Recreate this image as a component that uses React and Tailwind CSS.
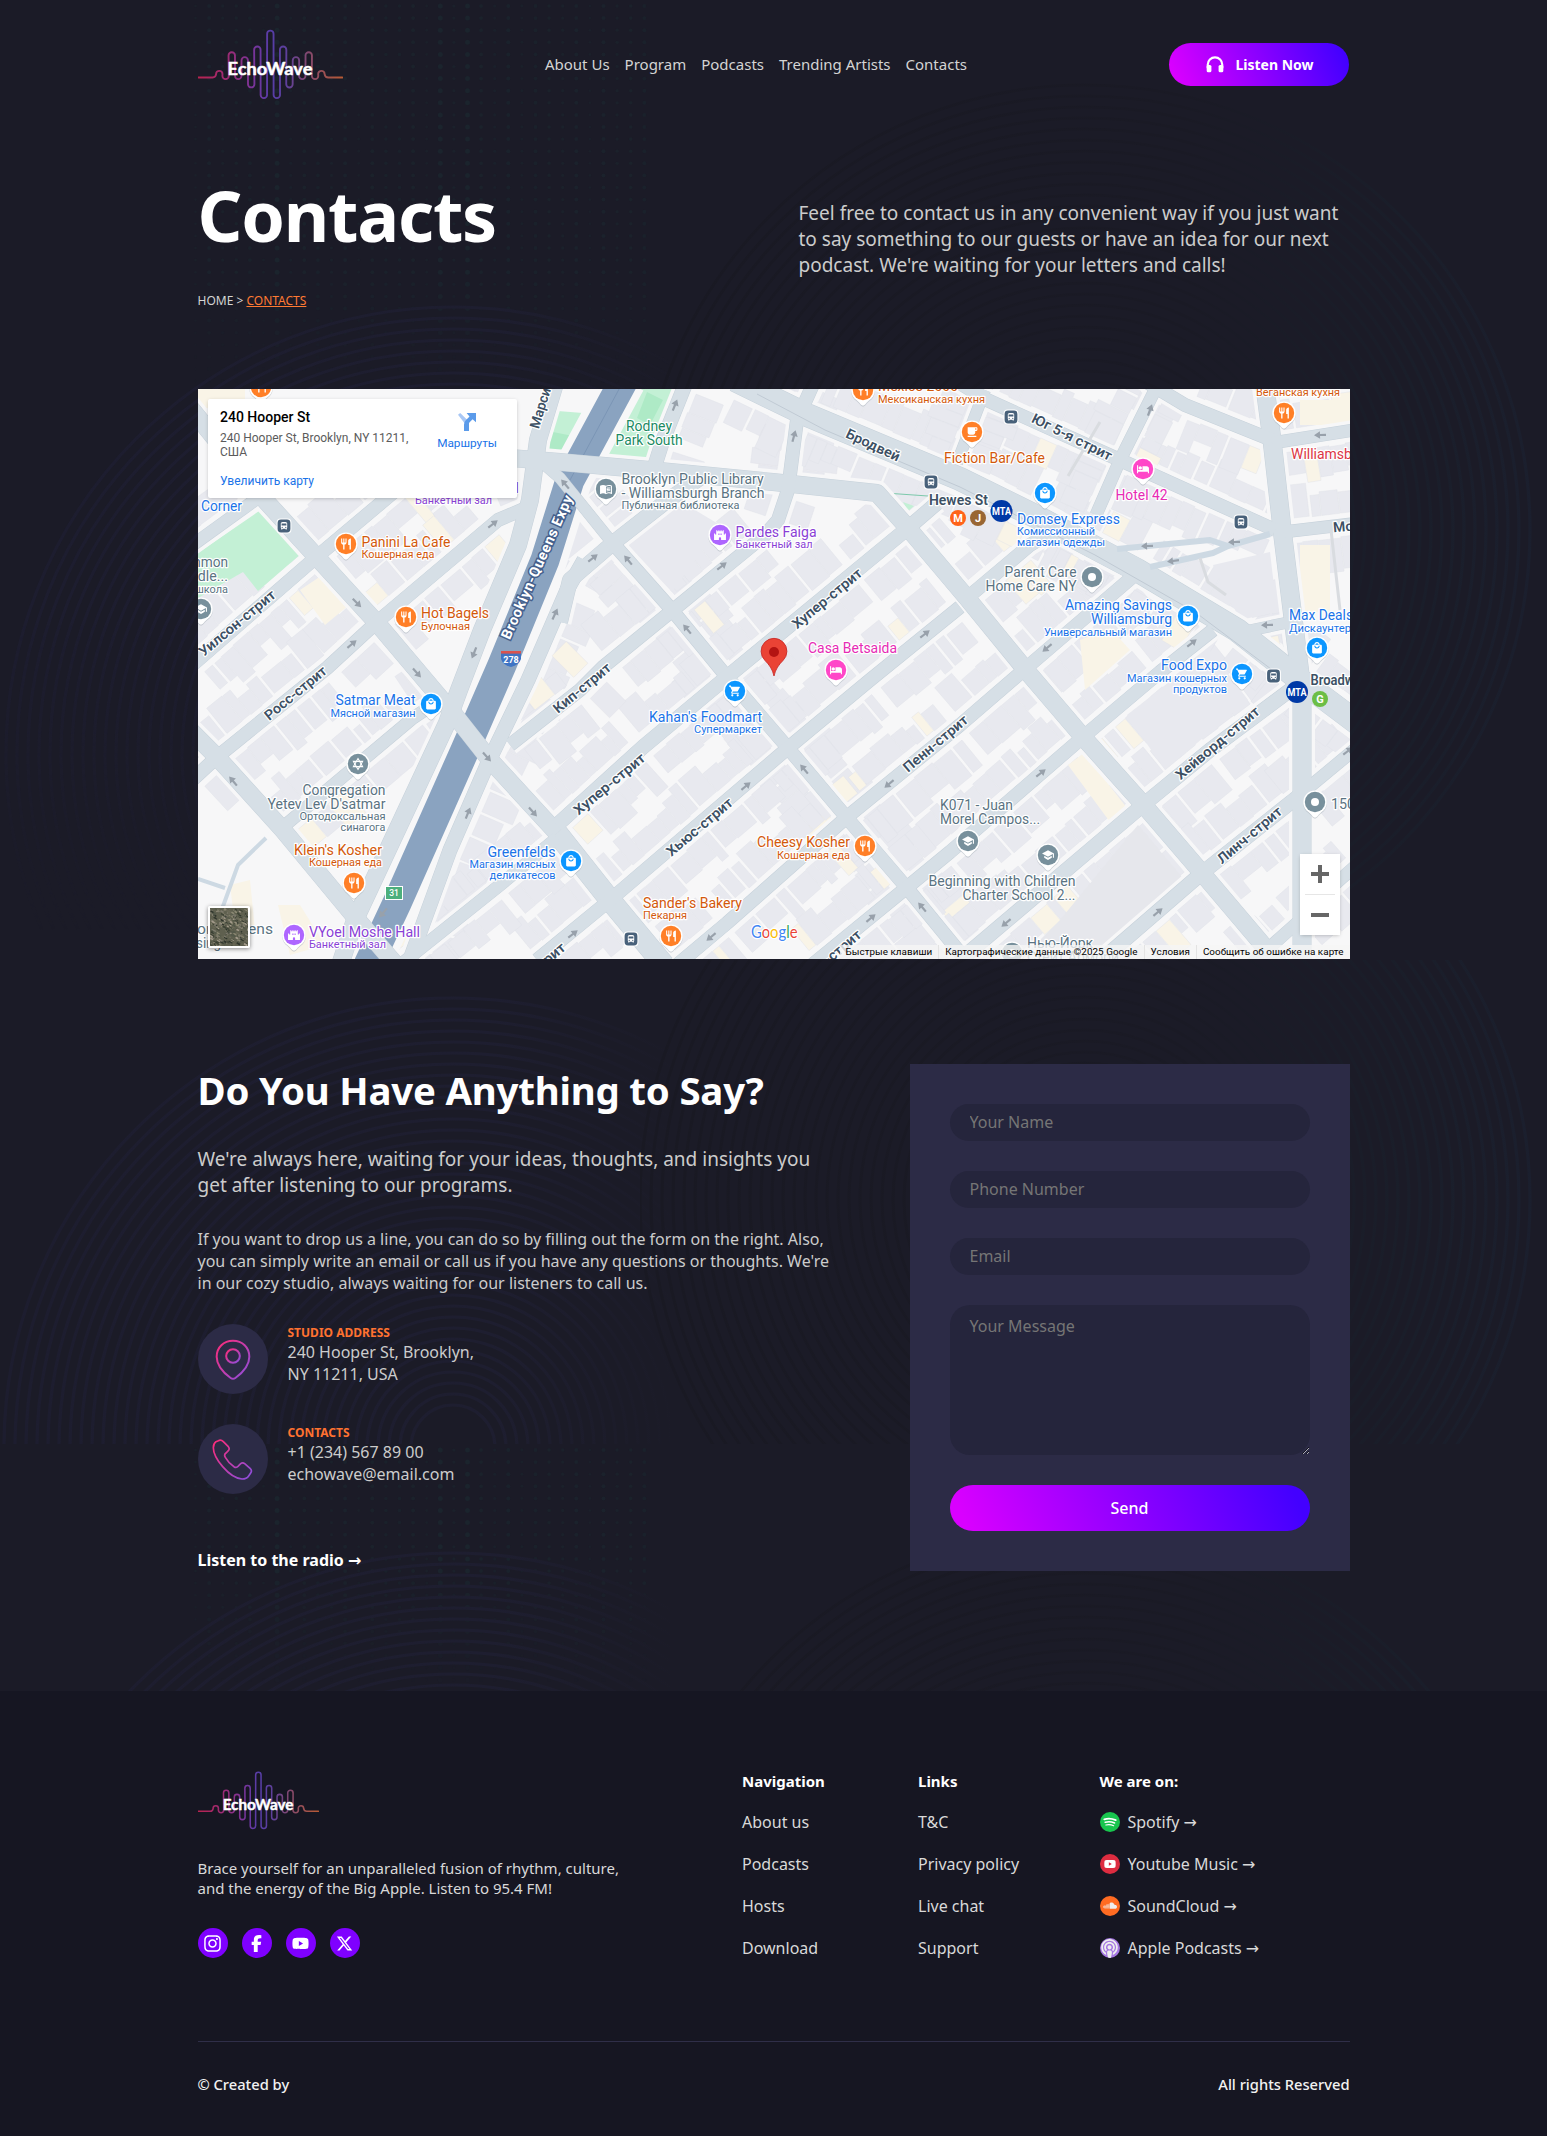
import React from "react";
import {
  FaInstagram,
  FaFacebookF,
  FaYoutube,
  FaXTwitter,
  FaSoundcloud,
  FaPodcast,
} from "react-icons/fa6";
import {
  MdRestaurant,
  MdLocalCafe,
  MdLocalMall,
  MdShoppingCart,
  MdHotel,
  MdMenuBook,
  MdSchool,
  MdDirectionsBus,
  MdCastle,
} from "react-icons/md";

/* ---------- helpers ---------- */

function makeRandom(seed) {
  let s = seed;
  return () => {
    s = (s * 1664525 + 1013904223) % 4294967296;
    return s / 4294967296;
  };
}

/* ---------- logo ---------- */

const WAVE = [
  [118, 183, 1], [137, 208, 0], [155.5, 127, 1], [175, 208, 0], [194.5, 142, 1], [214, 233, 0],
  [232.5, 110, 1], [252, 265, 0], [271.5, 62, 1], [291, 265, 0], [310, 110, 1], [329, 233, 0],
  [348.5, 142, 1], [367.5, 208, 0], [387, 127, 1], [406, 208, 0], [425, 183, 1],
];
const R = 9.65;
const WAVE_PATH =
  "M55 203H98Q107 203 108.5 193" +
  WAVE.map(([x, y, top]) => {
    const e = top ? y + R : y - R;
    return `L${x - R} ${e}A${R} ${R} 0 0 ${top} ${x + R} ${e}`;
  }).join("") +
  "Q436 203 446 203H488";

function Logo({ id, className }) {
  return (
    <svg viewBox="54 58 436 212" className={className} role="img" aria-label="EchoWave">
      <defs>
        <linearGradient id={id} gradientUnits="userSpaceOnUse" x1="55" y1="0" x2="488" y2="0">
          <stop offset="0" stopColor="#b82350" />
          <stop offset="0.22" stopColor="#9a2c78" />
          <stop offset="0.38" stopColor="#7a349a" />
          <stop offset="0.5" stopColor="#553da8" />
          <stop offset="0.62" stopColor="#5f409a" />
          <stop offset="0.76" stopColor="#83486f" />
          <stop offset="1" stopColor="#b85a34" />
        </linearGradient>
      </defs>
      <path d={WAVE_PATH} fill="none" stroke={`url(#${id})`} strokeWidth="5.6" strokeLinecap="round" />
      <text
        x="143"
        y="197"
        textLength="255"
        lengthAdjust="spacingAndGlyphs"
        fontFamily="Lato, sans-serif"
        fontWeight="700"
        fontSize="52"
        fill="#fff"
        stroke="#fff"
        strokeWidth="1.4"
        strokeLinejoin="round"
      >
        EchoWave
      </text>
    </svg>
  );
}

/* ---------- page backdrop ---------- */

function Rings({ cx, cy, from, to, stroke, step = 11, width = 3.2 }) {
  const out = [];
  for (let r = from; r <= to; r += step) {
    out.push(<circle key={r} cx={cx} cy={cy} r={r} fill="none" stroke={stroke} strokeWidth={width} />);
  }
  return <g>{out}</g>;
}

function Dots({ top, rows }) {
  const out = [];
  for (let c = 0; c < 34; c++) {
    const x = 195.5 + c * 13.6;
    const strength = [6, 18, 20].includes(c) ? 1 : 0.25 + 0.45 * Math.abs(Math.sin(c * 1.3));
    for (let r = 0; r < rows; r++) {
      const y = top + 6 + r * 12.1;
      const fade = Math.min(1, (rows - r) / 10);
      out.push(<circle key={`${c}-${r}`} cx={x} cy={y} r={0.9 + 1.6 * strength} fill="#1b242d" opacity={fade * (0.4 + 0.6 * strength)} />);
    }
  }
  return <g>{out}</g>;
}

function Backdrop() {
  return (
    <svg className="pointer-events-none absolute inset-x-0 top-0 h-[1691px] w-full" viewBox="0 0 1547 1691" preserveAspectRatio="none" aria-hidden="true">
      <defs>
        <linearGradient id="leftFade" gradientUnits="userSpaceOnUse" x1="0" x2="700" y1="0" y2="0">
          <stop offset="0" stopColor="#1d1d2f" />
          <stop offset="0.7" stopColor="#1e1e30" />
          <stop offset="0.97" stopColor="#1b1b27" />
        </linearGradient>
        <linearGradient id="rightFade" gradientUnits="userSpaceOnUse" x1="640" x2="1547" y1="0" y2="0">
          <stop offset="0" stopColor="#191923" />
          <stop offset="0.6" stopColor="#1a1a25" />
          <stop offset="0.85" stopColor="#1a1e2a" />
          <stop offset="1" stopColor="#1b1f2e" />
        </linearGradient>
        <linearGradient id="downFade" gradientUnits="userSpaceOnUse" x1="0" x2="0" y1="620" y2="930">
          <stop offset="0" stopColor="#fff" />
          <stop offset="1" stopColor="#000" />
        </linearGradient>
        <mask id="m1" maskUnits="userSpaceOnUse" x="0" y="0" width="670" height="940">
          <rect x="0" y="0" width="670" height="940" fill="url(#downFade)" />
        </mask>
        <clipPath id="c2"><rect x="0" y="960" width="670" height="484" /></clipPath>
        <clipPath id="c3"><rect x="0" y="1444" width="670" height="260" /></clipPath>
        <clipPath id="c4"><rect x="640" y="0" width="907" height="900" /></clipPath>
        <clipPath id="c5"><rect x="640" y="960" width="907" height="484" /></clipPath>
        <clipPath id="c6"><rect x="640" y="1444" width="907" height="260" /></clipPath>
      </defs>
      <Dots top={0} rows={32} />
      <Dots top={1444} rows={20} />
      <g mask="url(#m1)"><Rings cx={453} cy={754} from={40} to={450} stroke="url(#leftFade)" /></g>
      <g clipPath="url(#c2)"><Rings cx={453} cy={1447} from={42} to={455} stroke="url(#leftFade)" /></g>
      <g clipPath="url(#c3)"><Rings cx={453} cy={2000} from={40} to={450} stroke="url(#leftFade)" /></g>
      <g clipPath="url(#c4)"><Rings cx={1085} cy={530} from={60} to={450} stroke="url(#rightFade)" /></g>
      <g clipPath="url(#c5)"><Rings cx={1085} cy={1200} from={60} to={452} stroke="url(#rightFade)" /></g>
      <g clipPath="url(#c6)"><Rings cx={1085} cy={1974} from={60} to={450} stroke="url(#rightFade)" /></g>
    </svg>
  );
}

/* ---------- map ---------- */

const ROADS = [
  { w: 17, p: [[180, 395], [263, 498], [313, 553], [377, 623], [453, 713], [490, 760], [557, 833]] },
  { w: 21, p: [[557, 833], [610, 900], [664, 965]] },
  { w: 13, p: [[190, 667], [313, 560], [420, 470]] },
  { w: 12, p: [[190, 547], [262, 495]] },
  { w: 13, p: [[190, 782], [217, 757], [327, 668], [377, 622], [498, 520], [524, 509]] },
  { w: 17, p: [[556, 380], [538, 440], [530, 500], [518, 545], [482, 630], [459, 690], [447, 723], [355, 920], [340, 965]] },
  { w: 14, p: [[584, 560], [567, 590], [528, 680], [487, 765], [450, 850], [408, 965]] },
  { w: 15, p: [[560, 622], [570, 580], [613, 543], [668, 500], [700, 478]] },
  { w: 17, p: [[500, 457], [560, 462], [650, 470], [773, 482], [877, 493], [908, 528], [967, 598], [1025, 669], [1083, 737], [1142, 803], [1202, 873], [1280, 965]] },
  { w: 11, p: [[545, 465], [560, 478], [610, 540]] },
  { w: 13, p: [[610, 540], [672, 610], [727, 677], [788, 748], [847, 818], [907, 888], [970, 965]] },
  { w: 14, p: [[937, 503], [908, 528], [857, 570], [727, 677], [643, 747], [557, 825]] },
  { w: 13, p: [[815, 380], [797, 420], [788, 490], [778, 520], [765, 535], [673, 610], [603, 667], [580, 690], [510, 745]] },
  { w: 13, p: [[960, 607], [870, 680], [788, 748], [610, 900], [537, 960]] },
  { w: 13, p: [[967, 598], [1030, 545], [1068, 522]] },
  { w: 13, p: [[1137, 573], [1025, 669], [960, 725], [847, 817], [727, 923], [677, 965]] },
  { w: 13, p: [[1213, 630], [1160, 672], [1083, 737], [950, 852], [905, 889], [812, 965]] },
  { w: 14, p: [[1297, 685], [1210, 750], [1143, 805], [960, 960]] },
  { w: 14, p: [[1300, 795], [1202, 873], [1098, 963]] },
  { w: 12, p: [[1298, 922], [1250, 965]] },
  { w: 12, p: [[1360, 862], [1300, 915]] },
  { w: 12, p: [[1360, 745], [1296, 798]] },
  { w: 18, p: [[1264, 380], [1272, 440], [1283, 537], [1297, 650], [1302, 690], [1302, 965]] },
  { w: 23, p: [[735, 380], [807, 415], [960, 479], [1033, 515], [1137, 570], [1237, 630], [1300, 680], [1360, 725]] },
  { w: 13, p: [[955, 380], [987, 400], [1120, 460], [1275, 530]] },
  { w: 13, p: [[1140, 378], [1185, 405], [1272, 440]] },
  { w: 12, p: [[1160, 380], [1120, 460], [1096, 515]] },
  { w: 11, p: [[985, 390], [957, 463]] },
  { w: 12, p: [[1272, 443], [1360, 429]] },
  { w: 12, p: [[1283, 532], [1360, 523]] },
  { w: 11, p: [[1247, 631], [1300, 620]] },
  { w: 14, p: [[655, 465], [663, 440], [687, 380]] },
  { w: 17, p: [[180, 720], [217, 757], [283, 830], [360, 923], [396, 965]] },
  { w: 12, p: [[283, 827], [413, 718], [440, 700]] },
  { w: 12, p: [[557, 838], [500, 885], [400, 965]] },
];

const EXPRESSWAY = "M624 380L570 480L545 560L502 665L465 750L397 903L368 965";

const line = (pts) => pts.map((p, i) => `${i ? "L" : "M"}${p[0]} ${p[1]}`).join("");

function buildLots() {
  const rnd = makeRandom(41);
  const lots = [];
  const rows = ROADS.filter((r) => r.w <= 14 || r.w === 23);
  rows.forEach((road) => {
    for (let i = 0; i < road.p.length - 1; i++) {
      const [x1, y1] = road.p[i];
      const [x2, y2] = road.p[i + 1];
      const len = Math.hypot(x2 - x1, y2 - y1);
      if (len < 25) continue;
      const ang = (Math.atan2(y2 - y1, x2 - x1) * 180) / Math.PI;
      [-1, 1].forEach((side) => {
        let t = 8;
        while (t < len - 12) {
          const w = 8 + rnd() * 17;
          const d = 17 + rnd() * 17;
          const inset = road.w / 2 + 5 + rnd() * 2;
          lots.push({
            x: x1,
            y: y1,
            ang,
            rx: t,
            ry: side > 0 ? inset : -inset - d,
            w,
            d,
            fill: rnd() < 0.07 ? "#f9f4e7" : "#e8e9ef",
          });
          t += w + (rnd() < 0.3 ? 3 : 0.6);
        }
      });
    }
  });
  return lots;
}
const LOTS = buildLots();

const INK = {
  food: "#d3590b",
  shop: "#1a73e8",
  hall: "#8a3fd6",
  stay: "#e62bb5",
  gray: "#5a7382",
  park: "#1b8a63",
  red: "#dc3545",
  dark: "#3c5064",
};

/* x, baseline, text, ink, anchor, width, small */
const LABELS = [
  [201, 511, "Corner", "shop", "start", 41],
  [415, 504, "Банкетный зал", "hall", "start", 77, 1],
  [519, 493, "Hall", "hall", "end", 26],
  [228, 567, "Common", "gray", "end", 56],
  [228, 581, "Middle...", "gray", "end", 54],
  [228, 593, "школа", "gray", "end", 33, 1],
  [361.5, 547, "Panini La Cafe", "food", "start", 89],
  [361.5, 557.5, "Кошерная еда", "food", "start", 73, 1],
  [421, 618, "Hot Bagels", "food", "start", 68],
  [421, 630, "Булочная", "food", "start", 49, 1],
  [649, 431, "Rodney", "park", "middle", 46],
  [649, 445, "Park South", "park", "middle", 67],
  [621.5, 484, "Brooklyn Public Library", "gray", "start", 142],
  [621.5, 498, "- Williamsburgh Branch", "gray", "start", 143],
  [621.5, 509, "Публичная библиотека", "gray", "start", 118, 1],
  [735.5, 537, "Pardes Faiga", "hall", "start", 81],
  [735.5, 548, "Банкетный зал", "hall", "start", 77, 1],
  [878, 391, "Mexico 2000", "food", "start", 80],
  [878, 403, "Мексиканская кухня", "food", "start", 107, 1],
  [1045, 463, "Fiction Bar/Cafe", "food", "end", 101],
  [808, 653, "Casa Betsaida", "stay", "start", 89],
  [1115.5, 500, "Hotel 42", "stay", "start", 52],
  [1017, 524, "Domsey Express", "shop", "start", 103],
  [1017, 535, "Комиссионный", "shop", "start", 78, 1],
  [1017, 546, "магазин одежды", "shop", "start", 88, 1],
  [1076.5, 577, "Parent Care", "gray", "end", 72],
  [1076.5, 591, "Home Care NY", "gray", "end", 91],
  [1172, 610, "Amazing Savings", "shop", "end", 107],
  [1172, 624, "Williamsburg", "shop", "end", 81],
  [1172, 636, "Универсальный магазин", "shop", "end", 128, 1],
  [1256, 395.5, "Веганская кухня", "food", "start", 84, 1],
  [1291, 459, "Williamsburg", "red", "start", 81],
  [1289, 620, "Max Deals", "shop", "start", 64],
  [1289, 632, "Дискаунтер", "shop", "start", 62, 1],
  [1227, 670, "Food Expo", "shop", "end", 66],
  [1227, 681.5, "Магазин кошерных", "shop", "end", 100, 1],
  [1227, 692.5, "продуктов", "shop", "end", 54, 1],
  [415.5, 705, "Satmar Meat", "shop", "end", 80],
  [415.5, 716.5, "Мясной магазин", "shop", "end", 85, 1],
  [385.5, 795, "Congregation", "gray", "end", 83],
  [385.5, 809, "Yetev Lev D'satmar", "gray", "end", 118],
  [385.5, 819.5, "Ортодоксальная", "gray", "end", 86, 1],
  [385.5, 830.5, "синагога", "gray", "end", 45, 1],
  [382, 855, "Klein's Kosher", "food", "end", 88],
  [382, 866, "Кошерная еда", "food", "end", 73, 1],
  [555.5, 857, "Greenfelds", "shop", "end", 68],
  [555.5, 867.5, "Магазин мясных", "shop", "end", 86, 1],
  [555.5, 878.5, "деликатесов", "shop", "end", 66, 1],
  [309, 937, "VYoel Moshe Hall", "hall", "start", 111],
  [309, 947.5, "Банкетный зал", "hall", "start", 77, 1],
  [197, 934, "or Gardens", "gray", "start", 76],
  [196, 948, "sing", "gray", "start", 25],
  [762, 722, "Kahan's Foodmart", "shop", "end", 113],
  [762, 732.5, "Супермаркет", "shop", "end", 68, 1],
  [850, 847, "Cheesy Kosher", "food", "end", 93],
  [850, 858.5, "Кошерная еда", "food", "end", 73, 1],
  [643, 908, "Sander's Bakery", "food", "start", 99],
  [643, 918.5, "Пекарня", "food", "start", 44, 1],
  [940, 810, "K071 - Juan", "gray", "start", 73],
  [940, 824, "Morel Campos...", "gray", "start", 100],
  [1075.5, 886, "Beginning with Children", "gray", "end", 147],
  [1075.5, 900, "Charter School 2...", "gray", "end", 113],
  [1027, 948, "Нью-Йорк", "gray", "start", 66],
  [1027, 962, "Стейт Армори", "gray", "start", 92],
  [1331, 809, "150", "gray", "start", 24],
];

/* cx, cy, angle, text, width */
const STREETS = [
  [237, 623, -39.5, "Уилсон-стрит", 95],
  [295.5, 693, -39.5, "Росс-стрит", 76],
  [582, 688, -39.5, "Кип-стрит", 70],
  [609.5, 784, -39.5, "Хупер-стрит", 88],
  [827, 598.5, -39.5, "Хупер-стрит", 86],
  [699.5, 827, -40, "Хьюс-стрит", 82],
  [935.5, 743.5, -40, "Пенн-стрит", 80],
  [1217.5, 743, -40, "Хейворд-стрит", 105],
  [1249.5, 835, -40, "Линч-стрит", 80],
  [828, 959, -40, "Хьюс-стрит", 82],
  [533, 971, -40, "Росс-стрит", 80],
  [873, 445, 25, "Бродвей", 58],
  [1072, 437, 26.5, "Юг 5-я стрит", 88],
  [547, 386, -73, "Марси-авеню", 88],
  [1362, 525, -5, "Монтроз", 58],
  [958.5, 500.5, 0, "Hewes St", 59],
  [1339, 680.5, 0, "Broadway", 57],
];

const PINS = [
  [346, 544, "#ff7f27", MdRestaurant], [406, 617, "#ff7f27", MdRestaurant], [261, 387, "#ff7f27", MdRestaurant],
  [863, 390, "#ff7f27", MdRestaurant], [972, 432, "#ff7f27", MdLocalCafe], [1284, 413, "#ff7f27", MdRestaurant],
  [354, 883, "#ff7f27", MdRestaurant], [865, 846, "#ff7f27", MdRestaurant], [671, 936, "#ff7f27", MdRestaurant],
  [431, 704, "#0c96ff", MdLocalMall], [571, 861, "#0c96ff", MdLocalMall], [735, 691, "#0c96ff", MdShoppingCart],
  [1045, 493, "#0c96ff", MdLocalMall], [1188, 616, "#0c96ff", MdLocalMall], [1317, 648, "#0c96ff", MdLocalMall],
  [1242, 674, "#0c96ff", MdShoppingCart],
  [720, 535, "#ae66ff", MdCastle], [294, 935, "#ae66ff", MdCastle],
  [1143, 469, "#ff47c8", MdHotel], [836, 670, "#ff47c8", MdHotel],
  [606, 489, "#78909c", MdMenuBook], [358, 764, "#78909c", "star"], [1092, 577, "#78909c", "dot"],
  [968, 841, "#78909c", MdSchool], [1048, 855, "#78909c", MdSchool], [1315, 802, "#78909c", "dot"], [201, 609, "#78909c", MdSchool],
  [1012, 953, "#78909c", "dot"],
];

const STOPS = [[284, 526], [931, 482], [1011, 417], [1241, 522], [631, 939], [1273.5, 676]];

const BADGES = [
  [958, 518, 8, "#ff6319", "M", 11], [978, 518, 8, "#996633", "J", 11], [1320, 699, 8, "#6cbe45", "G", 11],
  [1001.5, 511, 11, "#0039a6", "MTA", 11], [1297, 692, 11, "#0039a6", "MTA", 11],
];

const ARROWS = [
  [357, 603, 45], [352, 644, -40], [474, 653, 112], [417, 673, 48], [233, 781, -130], [487, 757, 48], [468, 813, -68],
  [533, 812, 48], [383, 913, 130], [493, 524, -38], [555, 614, -65], [565, 484, -130], [593, 558, -38], [628, 560, -130],
  [722, 566, -38], [687, 629, -130], [675, 405, -68], [794, 436, -75], [925, 634, -38], [746, 786, -40], [804, 769, -130],
  [889, 784, 140], [711, 937, 140], [871, 918, -40], [922, 907, -130], [573, 934, -38], [1041, 773, -38], [1006, 923, 140],
  [1158, 912, -40], [1150, 410, -70], [1320, 435, 178], [1147, 546, 178], [1234, 542, 178], [1173, 561, 172],
  [1192, 643, -38], [1047, 648, 140], [1267, 625, 178], [1348, 751, -38],
];

function Pin({ x, y, color, icon: Icon }) {
  return (
    <g transform={`translate(${x} ${y})`}>
      <path d="M0 15.6C-2.2 15.6 -3.2 12.4 -6.6 10A11.8 11.8 0 1 1 6.6 10C3.2 12.4 2.2 15.6 0 15.6Z" fill="#9aa3ad" opacity="0.45" transform="translate(0 1)" />
      <path d="M0 15.6C-2.2 15.6 -3.2 12.4 -6.6 10A11.8 11.8 0 1 1 6.6 10C3.2 12.4 2.2 15.6 0 15.6Z" fill="#fff" />
      <circle r="10.2" fill={color} />
      {Icon === "dot" && <circle r="4" fill="#fff" />}
      {Icon === "star" && (
        <g fill="none" stroke="#fff" strokeWidth="1.1">
          <path d="M0 -5.5L4.6 2.6H-4.6Z" />
          <path d="M0 5.5L4.6 -2.6H-4.6Z" />
        </g>
      )}
      {typeof Icon !== "string" && <Icon x="-6.5" y="-6.5" size={13} color="#fff" />}
    </g>
  );
}

function MapDrawing() {
  return (
    <svg className="block h-[570px] w-full" viewBox="198 389 1152 570" fontFamily="Roboto, sans-serif">
      <rect x="190" y="380" width="1170" height="590" fill="#f7f7f8" />
      {LOTS.map((b, i) => (
        <rect
          key={i}
          x={b.rx}
          y={b.ry}
          width={b.w}
          height={b.d}
          fill={b.fill}
          stroke="#dfe1e8"
          strokeWidth="0.4"
          transform={`translate(${b.x} ${b.y}) rotate(${b.ang})`}
        />
      ))}
      <path d="M635 520L665 492L720 525L672 592L628 545Z" fill="#e8e9ef" />
      <path d="M1127 715L1210 650L1248 700L1165 770Z" fill="#e8e9ef" />
      <path d="M1213 565L1270 552L1277 612L1240 620Z" fill="#e8e9ef" />
      <path d="M1060 920L1138 825L1182 877L1105 945L1030 950Z" fill="#e6e7ec" />
      <path d="M1300 545H1330V612H1300Z" fill="#f9f4e7" />
      <path d="M1300 400H1350V425H1300ZM1068 765L1084 753L1127 808L1110 822Z" fill="#f9f4e7" />
      <path d="M300 590L330 570L355 600L325 625ZM198 389H245V408H198ZM1080 640L1110 628L1130 650L1085 690ZM230 885L250 880L255 930L235 925ZM278 905L300 905L325 945L290 955Z" fill="#f9f4e7" />
      <path d="M262 509L302 553L258 591L243 572L198 598V553Z" fill="#c3f0d5" />
      <path d="M634 389H672L652 462L607 457Z" fill="#c3f0d5" />
      <path d="M647 392L663 400L650 425L637 418Z" fill="#aeeac6" />
      <path d="M545 410L583 413L568 453L540 449Z" fill="#c3f0d5" />
      <path d="M543 430L578 437L568 453L540 449Z" fill="#aeeac6" />
      <path d="M903 502L914 506L908 511Z" fill="#c3f0d5" />
      <path d="M885 493L928 496" stroke="#7cc9ab" fill="none" />
      <g fill="none" strokeLinejoin="round">
        <path d={EXPRESSWAY} stroke="#f7f7f8" strokeWidth="44" />
        {ROADS.map((r, i) => (
          <path key={i} d={line(r.p)} stroke="#f7f7f8" strokeWidth={r.w + 8} />
        ))}
        <path d={EXPRESSWAY} stroke="#8aa3c0" strokeWidth="29" />
        <path d="M624 380L570 480" stroke="#7b95b5" strokeWidth="1" />
        {ROADS.map((r, i) => (
          <path key={i} d={line(r.p)} stroke="#c6d1da" strokeWidth={r.w + 1} />
        ))}
        {ROADS.map((r, i) => (
          <path key={i} d={line(r.p)} stroke="#d6dfe6" strokeWidth={r.w} />
        ))}
        <path d="M1117 549L1210 540L1228 546L1270 534M1150 567L1213 553L1228 546" stroke="#cdd9e3" strokeWidth="6" />
        <path d="M266 838L238 865L218 920M198 879L225 888" stroke="#cdd9e3" strokeWidth="4" />
        <path d="M757 394L825 430L960 487L1095 555L1195 612L1275 672" stroke="#c0cad4" strokeWidth="1" />
        <path d="M1200 558L1208 582L1226 595M1100 422L1068 476M1331 530L1340 610" stroke="#d9dce0" strokeWidth="3" />
      </g>
      {ARROWS.map(([x, y, a], i) => (
        <path key={i} d="M-6 -1.1H0V-3.8L6 0L0 3.8V1.1H-6Z" fill="#98a1ab" transform={`translate(${x} ${y}) rotate(${a})`} />
      ))}
      <g fontSize="14" fontWeight="600" fill={INK.dark} stroke="#fff" strokeWidth="2.4" strokeLinejoin="round" textAnchor="middle" style={{ paintOrder: "stroke" }}>
        {STREETS.map(([x, y, a, t, w], i) => (
          <text key={i} transform={`translate(${x} ${y}) rotate(${a})`} y="4.8" textLength={w} lengthAdjust="spacingAndGlyphs">
            {t}
          </text>
        ))}
      </g>
      <text
        transform="translate(537 567) rotate(-66)"
        y="5"
        textAnchor="middle"
        textLength="156"
        fontSize="14.5"
        fontWeight="700"
        fill="#fff"
        stroke="#45608c"
        strokeWidth="3"
        style={{ paintOrder: "stroke" }}
      >
        Brooklyn-Queens Expy
      </text>
      {PINS.map(([x, y, c, icon], i) => (
        <Pin key={i} x={x} y={y} color={c} icon={icon} />
      ))}
      {STOPS.map(([x, y], i) => (
        <g key={i} transform={`translate(${x} ${y})`}>
          <rect x="-7.4" y="-7.4" width="14.8" height="14.8" rx="4" fill="#fff" />
          <rect x="-6.4" y="-6.4" width="12.8" height="12.8" rx="3.4" fill="#48617a" />
          <MdDirectionsBus x="-4.8" y="-4.8" size={9.6} color="#fff" />
        </g>
      ))}
      {BADGES.map(([x, y, r, c, t, s], i) => (
        <g key={i} transform={`translate(${x} ${y})`} textAnchor="middle">
          <circle r={r} fill={c} />
          <text y={s * 0.36} fontSize={s} fontWeight="700" fill="#fff" textLength={t === "MTA" ? 19 : undefined} lengthAdjust="spacingAndGlyphs">{t}</text>
        </g>
      ))}
      <g transform="translate(511 659)" textAnchor="middle">
        <path d="M-10 -7H10V0Q8 6 0 8Q-8 6 -10 0Z" fill="#3f74c4" />
        <rect x="-10" y="-8" width="20" height="2.6" fill="#d9534f" />
        <text y="4" fontSize="9" fontWeight="700" fill="#fff">278</text>
      </g>
      <g transform="translate(394 893)" textAnchor="middle">
        <rect x="-8.5" y="-6.5" width="17" height="13" fill="#4caf7d" stroke="#fff" />
        <text y="3.2" fontSize="8.5" fontWeight="500" fill="#fff">31</text>
      </g>
      <g stroke="#fff" strokeWidth="2.4" strokeLinejoin="round" style={{ paintOrder: "stroke" }}>
        {LABELS.map(([x, y, t, ink, anchor, w, small], i) => (
          <text
            key={i}
            x={x}
            y={y}
            textAnchor={anchor}
            textLength={w}
            lengthAdjust="spacingAndGlyphs"
            fontSize={small ? 11.3 : 14}
            fill={INK[ink]}
          >
            {t}
          </text>
        ))}
      </g>
      <g>
        <path d="M774 676C772.5 669 769 664.5 765 660.5A12.9 12.9 0 1 1 783 660.5C779 664.5 775.5 669 774 676Z" fill="#ea4335" stroke="#c5221f" strokeWidth="0.8" />
        <circle cx="774" cy="652" r="5" fill="#b31412" />
      </g>
      <text
        x="751"
        y="937.5"
        textLength="46.5"
        lengthAdjust="spacingAndGlyphs"
        fontFamily="Lato, sans-serif"
        fontSize="18"
        stroke="#fff"
        strokeWidth="2.5"
        style={{ paintOrder: "stroke" }}
      >
        <tspan fill="#4285f4">G</tspan>
        <tspan fill="#ea4335">o</tspan>
        <tspan fill="#fbbc04">o</tspan>
        <tspan fill="#4285f4">g</tspan>
        <tspan fill="#34a853">l</tspan>
        <tspan fill="#ea4335">e</tspan>
      </text>
    </svg>
  );
}

const AERIAL = (() => {
  const rnd = makeRandom(7);
  const tones = ["#8b8872", "#3f4436", "#6b6a58", "#a59c8c", "#54594a", "#7d7a6c", "#2f352c"];
  return Array.from({ length: 330 }, () => [rnd() * 38, rnd() * 38, 1 + rnd() * 3, 0.8 + rnd() * 1.2, tones[Math.floor(rnd() * 7)]]);
})();

function MapSection() {
  return (
    <section className="relative mt-[81px] h-[570px] overflow-hidden font-[Roboto,sans-serif]">
      <MapDrawing />

      <div className="absolute left-[10.5px] top-[10px] flex h-[99px] w-[309px] justify-between rounded-[2px] bg-white pl-3 pr-[20px] pt-[10px] shadow-[0_1px_4px_-1px_rgba(0,0,0,0.3)]">
        <div className="w-[200px]">
          <p className="text-[14px] font-medium leading-[17px] text-black">240 Hooper St</p>
          <p className="mt-[5px] text-[12px] leading-[14px] text-[#5b5b5b]">240 Hooper St, Brooklyn, NY 11211, США</p>
          <p className="mt-[15px] text-[12px] leading-[14px] text-[#1a73e8]">Увеличить карту</p>
        </div>
        <div className="flex flex-col items-center pt-1">
          <svg viewBox="0 0 18 18" className="h-[18px] w-[18px]">
            <path d="M0 1.8L2.2 0L9.4 7L6.8 10.4Z" fill="#a8c7f5" />
            <path d="M6 18V11.5Q6 9 8 7L11.5 3.6L8.6 0H18V9.2L14.6 6.2L11.4 9.4Q11 9.8 11 11V18Z" fill="#5b9bea" />
          </svg>
          <p className="mt-[5px] text-[11.8px] leading-[14px] text-[#1a73e8]">Маршруты</p>
        </div>
      </div>

      <div className="absolute bottom-[11px] left-[10.5px] h-[42px] w-[42px] rounded-[2px] border-2 border-white shadow-[0_1px_4px_rgba(0,0,0,0.45)]">
        <svg viewBox="0 0 38 38" className="block h-full w-full">
          <rect width="38" height="38" fill="#5f604f" />
          {AERIAL.map(([x, y, w, h, c], i) => (
            <rect key={i} x={x} y={y} width={w} height={h} fill={c} transform={`rotate(30 ${x} ${y})`} />
          ))}
        </svg>
      </div>

      <div className="absolute bottom-[24px] right-[9.5px] flex h-[81px] w-[40px] flex-col items-center bg-white shadow-[0_1px_4px_-1px_rgba(0,0,0,0.3)]">
        <svg viewBox="0 0 18 18" className="my-[11px] h-[18px] w-[18px]">
          <path d="M7 0H11V7H18V11H11V18H7V11H0V7H7Z" fill="#666" />
        </svg>
        <div className="h-px w-[30px] bg-[#e6e6e6]" />
        <svg viewBox="0 0 18 18" className="mt-[11px] h-[18px] w-[18px]">
          <path d="M0 7H18V11H0Z" fill="#666" />
        </svg>
      </div>

      <div className="absolute bottom-0 right-0 flex h-[14px] items-center whitespace-nowrap bg-[#f5f5f5]/80 text-[9.85px] leading-[14px] tracking-[0.05px] text-black">
        <span className="px-[6px]">Быстрые клавиши</span>
        <span className="border-l border-[#e3e3e3] px-[6px]">Картографические данные ©2025 Google</span>
        <span className="border-l border-[#e3e3e3] px-[6px]">Условия</span>
        <span className="border-l border-[#e3e3e3] px-[6px]">Сообщить об ошибке на карте</span>
      </div>
    </section>
  );
}

/* ---------- page sections ---------- */

function Headphones() {
  return (
    <svg viewBox="0 0 19 18" className="h-[17px] w-[18px]" fill="none">
      <path d="M1.8 13V9.2A7.7 7.7 0 0 1 17.2 9.2V13" stroke="#fff" strokeWidth="2.3" />
      <rect x="0.7" y="9.6" width="5" height="7.6" rx="1.6" fill="#fff" />
      <rect x="13.3" y="9.6" width="5" height="7.6" rx="1.6" fill="#fff" />
    </svg>
  );
}

function Header() {
  return (
    <header className="flex h-[129px] items-center justify-between">
      <Logo id="logoTop" className="h-[71px] w-[145px]" />
      <nav className="flex gap-[15px] pb-[2px] text-[15px] leading-5 text-[#d4d4d4]">
        {["About Us", "Program", "Podcasts", "Trending Artists", "Contacts"].map((t) => (
          <a key={t}>{t}</a>
        ))}
      </nav>
      <button className="flex h-[43px] w-[180px] items-center justify-center gap-[11px] rounded-full bg-[linear-gradient(66deg,#d900ff_5%,#4300ff_95%)] pl-px text-[14px] font-bold text-white">
        <Headphones />
        Listen Now
      </button>
    </header>
  );
}

function Hero() {
  return (
    <section className="flex h-[179px] justify-between pt-[37px]">
      <div>
        <h1 className="text-[70px] font-bold leading-[98px] tracking-[-1.2px] text-white">Contacts</h1>
        <p className="mt-[29px] text-[12px] leading-4 text-[#d4d4d4]">
          HOME &gt; <a className="text-[#ff7a33] underline">CONTACTS</a>
        </p>
      </div>
      <p className="mt-[34px] w-[551px] text-[19px] leading-[26px] text-[#cccccc]">
        Feel free to contact us in any convenient way if you just want to say something to our guests or have an idea for our next podcast. We're waiting for your letters and calls!
      </p>
    </section>
  );
}

function ContactRow({ label, lines, icon }) {
  return (
    <div className="flex gap-5">
      <div className="flex h-[70px] w-[70px] items-center justify-center rounded-full bg-[#2c2b46]">{icon}</div>
      <div className="pt-px">
        <p className="text-[12px] font-bold leading-4 text-[#ff7230]">{label}</p>
        {lines.map((l) => (
          <p key={l} className="text-[16px] leading-[22px] text-[#cccccc]">{l}</p>
        ))}
      </div>
    </div>
  );
}

const fieldClass =
  "block w-full rounded-[20px] bg-[#25253c] px-5 text-[16px] text-white outline-none placeholder:text-[#757575]";

function ContactSection() {
  return (
    <section className="mt-[105px] flex h-[507px] justify-between">
      <div className="flex w-[650px] flex-col">
        <h2 className="-mt-px text-[38.4px] font-bold leading-[54px] tracking-[-0.2px] text-white">Do You Have Anything to Say?</h2>
        <p className="mt-[29px] w-[640px] text-[19px] leading-[26px] text-[#cccccc]">
          We're always here, waiting for your ideas, thoughts, and insights you get after listening to our programs.
        </p>
        <p className="mt-[30px] w-[640px] text-[16px] leading-[22px] text-[#cccccc]">
          If you want to drop us a line, you can do so by filling out the form on the right. Also, you can simply write an email or call us if you have any questions or thoughts. We're in our cozy studio, always waiting for our listeners to call us.
        </p>
        <div className="mt-[30px] flex flex-col gap-[30px]">
          <ContactRow
            label="STUDIO ADDRESS"
            lines={["240 Hooper St, Brooklyn,", "NY 11211, USA"]}
            icon={
              <svg viewBox="105 85 108 123" className="h-[41px] w-[36px]" fill="none" strokeWidth="6">
                <defs>
                  <linearGradient id="pinStroke" x1="0" y1="0" x2="1" y2="1">
                    <stop offset="0" stopColor="#ff2b78" />
                    <stop offset="1" stopColor="#8a4fe0" />
                  </linearGradient>
                </defs>
                <path
                  d="M159 90C131 90 110 110 110 138C110 168 133 188 152 202Q159 207 166 202C185 188 208 168 208 138C208 110 187 90 159 90Z"
                  stroke="url(#pinStroke)"
                />
                <circle cx="159" cy="136" r="20.5" stroke="url(#pinStroke)" />
              </svg>
            }
          />
          <ContactRow
            label="CONTACTS"
            lines={["+1 (234) 567 89 00", "echowave@email.com"]}
            icon={
              <svg viewBox="98 385 123 123" className="h-[41px] w-[41px]" fill="none" strokeWidth="5">
                <defs>
                  <linearGradient id="phoneStroke" x1="0" y1="0" x2="1" y2="1">
                    <stop offset="0" stopColor="#ff2b78" />
                    <stop offset="1" stopColor="#8a4fe0" />
                  </linearGradient>
                </defs>
                <path
                  d="M110 393L117 390Q125 386 132 393L147 408Q152 414 147 420L140 427Q133 432 138 440Q148 458 165 469Q170 472 176 467L184 459Q190 454 196 459L213 474Q219 480 214 487L208 496Q202 505 188 505Q160 503 130 468Q102 435 102 411Q102 399 110 393Z"
                  stroke="url(#phoneStroke)"
                />
              </svg>
            }
          />
        </div>
        <a className="mt-auto text-[16px] font-bold leading-[22px] text-white">Listen to the radio →</a>
      </div>

      <form className="flex w-[440px] flex-col gap-[30px] bg-[#2c2b46] p-10">
        <input className={`${fieldClass} h-[37px] pb-[2px]`} placeholder="Your Name" />
        <input className={`${fieldClass} h-[37px] pb-[2px]`} placeholder="Phone Number" />
        <input className={`${fieldClass} h-[37px] pb-[2px]`} placeholder="Email" />
        <textarea className={`${fieldClass} h-[150px] resize pt-[10px] leading-[22px]`} placeholder="Your Message" />
        <button type="button" className="h-[46px] rounded-full bg-[linear-gradient(66deg,#d900ff_5%,#4300ff_95%)] text-[16px] font-medium text-white">
          Send
        </button>
      </form>
    </section>
  );
}

function Column({ title, children, className }) {
  return (
    <div className={className}>
      <p className="text-[15px] font-bold leading-[22px] text-white">{title}</p>
      <ul className="mt-[19px] flex flex-col gap-5 text-[16px] leading-[22px] text-[#d9d9d9]">{children}</ul>
    </div>
  );
}

function Service({ color, icon, name }) {
  return (
    <li className="flex items-center gap-2">
      <span className="flex h-5 w-5 items-center justify-center overflow-hidden rounded-full" style={{ background: color }}>
        {icon}
      </span>
      {name} →
    </li>
  );
}

function Footer() {
  return (
    <footer className="relative mt-[120px] h-[445px] bg-[#161622]">
      <div className="mx-auto w-[1152px] pt-[79px]">
        <div className="flex h-[271px]">
          <div className="w-[544.5px]">
            <Logo id="logoBottom" className="mt-[1px] h-[59px] w-[121px]" />
            <p className="mt-[28px] w-[440px] text-[15px] leading-5 text-[#d9d9d9]">
              Brace yourself for an unparalleled fusion of rhythm, culture, and the energy of the Big Apple. Listen to 95.4 FM!
            </p>
            <div className="mt-[30px] flex gap-[14px] text-white">
              {[FaInstagram, FaFacebookF, FaYoutube, FaXTwitter].map((Icon, i) => (
                <span key={i} className="flex h-[30px] w-[30px] items-center justify-center rounded-full bg-[#7f00ff]">
                  <Icon size={i === 0 ? 19 : 17} />
                </span>
              ))}
            </div>
          </div>
          <Column title="Navigation" className="w-[176px]">
            <li>About us</li>
            <li>Podcasts</li>
            <li>Hosts</li>
            <li>Download</li>
          </Column>
          <Column title="Links" className="w-[181.5px]">
            <li>T&amp;C</li>
            <li>Privacy policy</li>
            <li>Live chat</li>
            <li>Support</li>
          </Column>
          <Column title="We are on:">
            <Service
              color="#18c54e"
              name="Spotify"
              icon={
                <svg viewBox="0 0 20 20" className="h-5 w-5" fill="none" stroke="#fff" strokeLinecap="round">
                  <path d="M4.3 7.3Q10 5.6 15.7 8.1" strokeWidth="1.9" />
                  <path d="M5.2 10.3Q10 9 14.6 11" strokeWidth="1.5" />
                  <path d="M5.9 13Q10 12 13.6 13.7" strokeWidth="1.2" />
                </svg>
              }
            />
            <Service color="#dd2c40" name="Youtube Music" icon={<FaYoutube size={12} color="#fff" />} />
            <Service color="#ff6b22" name="SoundCloud" icon={<FaSoundcloud size={14} color="#eee" />} />
            <Service color="#a678e2" name="Apple Podcasts" icon={<FaPodcast size={19} color="#eee" />} />
          </Column>
        </div>
        <div className="flex justify-between border-t border-[#2f2e48] pt-[31px] text-[14.7px] font-medium leading-[22px] text-[#f2f2f2]">
          <span>© Created by</span>
          <span>All rights Reserved</span>
        </div>
      </div>
    </footer>
  );
}

export default function App() {
  return (
    <div className="relative h-[2136px] w-full overflow-hidden bg-[#1b1b27] font-['Noto_Sans','DejaVu_Sans',sans-serif]">
      <Backdrop />
      <div className="relative mx-auto w-[1152px]">
        <Header />
        <Hero />
        <MapSection />
        <ContactSection />
      </div>
      <Footer />
    </div>
  );
}
